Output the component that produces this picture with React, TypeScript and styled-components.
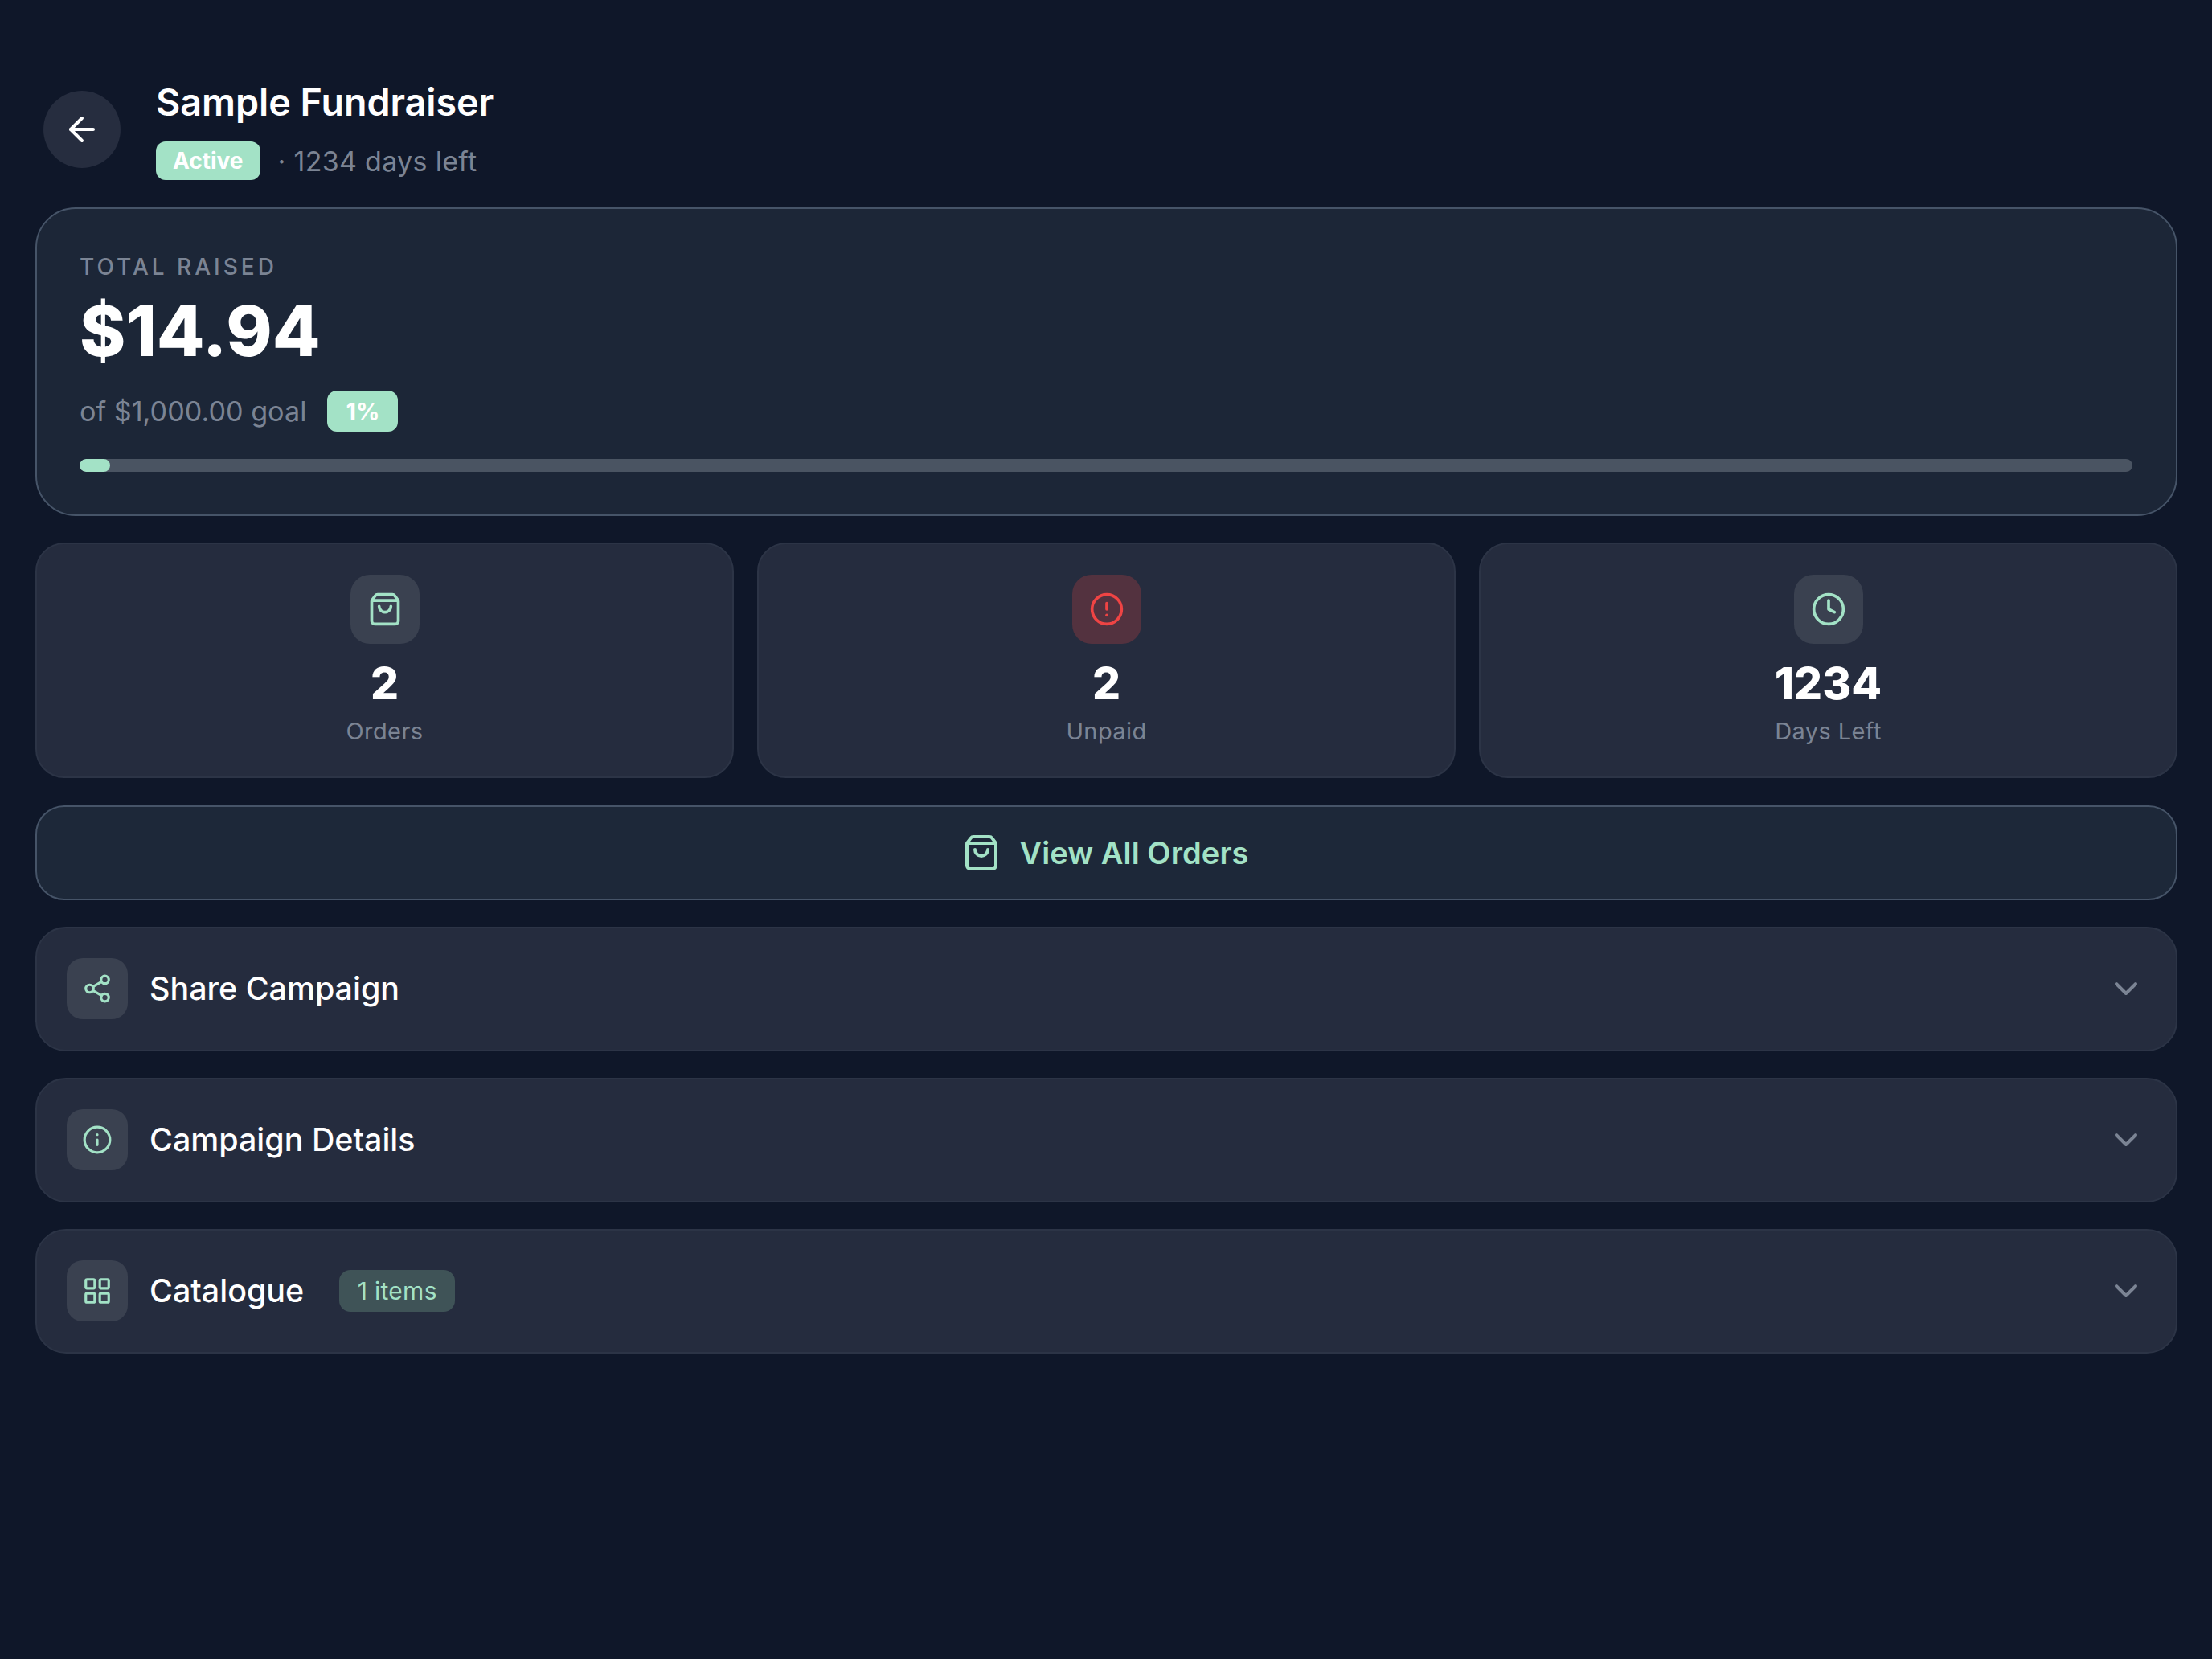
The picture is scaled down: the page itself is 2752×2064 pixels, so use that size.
import React, { FC, ReactNode } from 'react'
import styled, { createGlobalStyle } from 'styled-components'
import {
	ArrowLeft,
	ChevronDown,
	CircleAlert,
	Clock,
	Info,
	LayoutGrid,
	Share2,
	ShoppingBag,
} from 'lucide-react'

const mint = '#a3e2c6'

const GlobalStyle = createGlobalStyle`
	html, body {
		margin: 0;
		padding: 0;
		background: #0f1729;
	}
	body {
		font-family: Inter, "Noto Sans", sans-serif;
		color: #fff;
	}
	* {
		box-sizing: border-box;
	}
`

const Page = styled.div`
	width: 2752px;
	height: 2064px;
	padding: 96px 43px 0 44px;
	display: flex;
	flex-direction: column;
	gap: 33.5px;
	background: #0f1729;
	overflow: hidden;
`

const Header = styled.header`
	height: 128.5px;
	margin-bottom: -0.5px;
	padding-left: 10px;
	display: flex;
	align-items: flex-start;
	gap: 44px;
`

const BackButton = styled.button`
	width: 96px;
	height: 96px;
	margin-top: 17px;
	flex: none;
	padding: 0;
	display: flex;
	align-items: center;
	justify-content: center;
	border: 0;
	border-radius: 50%;
	background: #262d3f;
	color: #fff;
`

const HeaderText = styled.div`
	margin-top: 2px;
	display: flex;
	flex-direction: column;
	gap: 20px;
`

const Title = styled.h1`
	margin: 0;
	font-size: 46.6px;
	line-height: 58px;
	font-weight: 600;
	color: #fff;
`

const StatusRow = styled.div`
	display: flex;
	align-items: center;
	gap: 22px;
`

const StatusBadge = styled.span`
	height: 48px;
	padding: 0 21px;
	display: inline-flex;
	align-items: center;
	border-radius: 12px;
	background: ${mint};
	color: #fff;
	font-size: 28px;
	font-weight: 700;
`

const StatusText = styled.span`
	font-size: 34px;
	letter-spacing: 0.3px;
	color: #7b8494;
`

const RaisedCard = styled.section`
	height: 384px;
	padding: 55px 54px 0 53px;
	border: 2px solid #465468;
	border-radius: 50px;
	background: #1c2637;
`

const RaisedLabel = styled.div`
	font-size: 28px;
	line-height: 34px;
	font-weight: 500;
	letter-spacing: 4px;
	color: #7b8494;
`

const RaisedAmount = styled.div`
	margin-top: 12px;
	font-size: 87px;
	line-height: 102px;
	font-weight: 800;
	color: #fff;
`

const GoalRow = styled.div`
	margin-top: 23px;
	display: flex;
	align-items: center;
	gap: 26px;
`

const GoalText = styled.span`
	font-size: 34.2px;
	color: #7b8494;
`

const PercentBadge = styled.span`
	height: 51px;
	padding: 0 23px;
	display: inline-flex;
	align-items: center;
	border-radius: 12px;
	background: ${mint};
	color: #fff;
	font-size: 29px;
	font-weight: 700;
`

const ProgressTrack = styled.div`
	height: 16px;
	margin-top: 34px;
	border-radius: 8px;
	background: #4a5462;
	overflow: hidden;
`

const ProgressFill = styled.div`
	height: 100%;
	border-radius: 8px;
	background: ${mint};
`

const StatGrid = styled.div`
	display: grid;
	grid-template-columns: repeat(3, 1fr);
	gap: 29px;
`

const StatCard = styled.div`
	height: 293px;
	padding-top: 38px;
	display: flex;
	flex-direction: column;
	align-items: center;
	border: 2px solid #2c3446;
	border-radius: 36px;
	background: #252c3e;
`

const StatIcon = styled.div<{ $tone: 'mint' | 'red' }>`
	width: 86px;
	height: 86px;
	display: flex;
	align-items: center;
	justify-content: center;
	border-radius: 24px;
	background: ${(props) => (props.$tone === 'red' ? '#53323f' : '#3a4150')};
	color: ${(props) => (props.$tone === 'red' ? '#ef4444' : mint)};
`

const StatValue = styled.div`
	margin-top: 15px;
	font-size: 55px;
	line-height: 68px;
	font-weight: 800;
	color: #fff;
`

const StatLabel = styled.div`
	margin-top: 9px;
	font-size: 29px;
	line-height: 34px;
	letter-spacing: 0.4px;
	color: #7b8494;
`

const OrdersButton = styled.button`
	height: 118px;
	padding: 0 2px 0 0;
	display: flex;
	align-items: center;
	justify-content: center;
	gap: 23px;
	border: 2px solid #465468;
	border-radius: 36px;
	background: #1d2839;
	color: ${mint};
	font-family: inherit;
	font-size: 38px;
	font-weight: 600;
	letter-spacing: 0.1px;
`

const AccordionRow = styled.div`
	height: 154.5px;
	padding: 0 38px 0 37px;
	display: flex;
	align-items: center;
	border: 2px solid #2c3446;
	border-radius: 38px;
	background: #252c3e;
`

const RowIcon = styled.div`
	width: 76px;
	height: 76px;
	flex: none;
	display: flex;
	align-items: center;
	justify-content: center;
	border-radius: 20px;
	background: #3a4150;
	color: ${mint};
`

const RowTitle = styled.span`
	margin-left: 27px;
	font-size: 39.4px;
	font-weight: 500;
	color: #fff;
`

const CountChip = styled.span`
	height: 52px;
	margin-left: 44px;
	padding: 0 22.5px;
	display: inline-flex;
	align-items: center;
	border-radius: 14px;
	background: #3f5357;
	color: ${mint};
	font-size: 30px;
	letter-spacing: 0.3px;
`

const RowChevron = styled.div`
	margin-left: auto;
	display: flex;
	color: #7b8494;
`

interface StatProps {
	icon: ReactNode
	tone?: 'mint' | 'red'
	value: string
	label: string
}

const Stat: FC<StatProps> = ({ icon, tone = 'mint', value, label }) => (
	<StatCard>
		<StatIcon $tone={tone}>{icon}</StatIcon>
		<StatValue>{value}</StatValue>
		<StatLabel>{label}</StatLabel>
	</StatCard>
)

interface SectionProps {
	icon: ReactNode
	title: string
	count?: string
}

const Section: FC<SectionProps> = ({ icon, title, count }) => (
	<AccordionRow>
		<RowIcon>{icon}</RowIcon>
		<RowTitle>{title}</RowTitle>
		{count && <CountChip>{count}</CountChip>}
		<RowChevron>
			<ChevronDown size={48} strokeWidth={2} />
		</RowChevron>
	</AccordionRow>
)

const App: FC = () => {
	return (
		<Page>
			<GlobalStyle />
			<Header>
				<BackButton>
					<ArrowLeft size={48} strokeWidth={2} />
				</BackButton>
				<HeaderText>
					<Title>Sample Fundraiser</Title>
					<StatusRow>
						<StatusBadge>Active</StatusBadge>
						<StatusText>· 1234 days left</StatusText>
					</StatusRow>
				</HeaderText>
			</Header>

			<RaisedCard>
				<RaisedLabel>TOTAL RAISED</RaisedLabel>
				<RaisedAmount>$14.94</RaisedAmount>
				<GoalRow>
					<GoalText>of $1,000.00 goal</GoalText>
					<PercentBadge>1%</PercentBadge>
				</GoalRow>
				<ProgressTrack>
					<ProgressFill style={{ width: `${(14.94 / 1000) * 100}%` }} />
				</ProgressTrack>
			</RaisedCard>

			<StatGrid>
				<Stat icon={<ShoppingBag size={44} />} value="2" label="Orders" />
				<Stat icon={<CircleAlert size={44} />} tone="red" value="2" label="Unpaid" />
				<Stat icon={<Clock size={44} />} value="1234" label="Days Left" />
			</StatGrid>

			<OrdersButton>
				<ShoppingBag size={48} />
				View All Orders
			</OrdersButton>

			<Section icon={<Share2 size={38} />} title="Share Campaign" />
			<Section icon={<Info size={38} />} title="Campaign Details" />
			<Section icon={<LayoutGrid size={38} />} title="Catalogue" count="1 items" />
		</Page>
	)
}

export default App
